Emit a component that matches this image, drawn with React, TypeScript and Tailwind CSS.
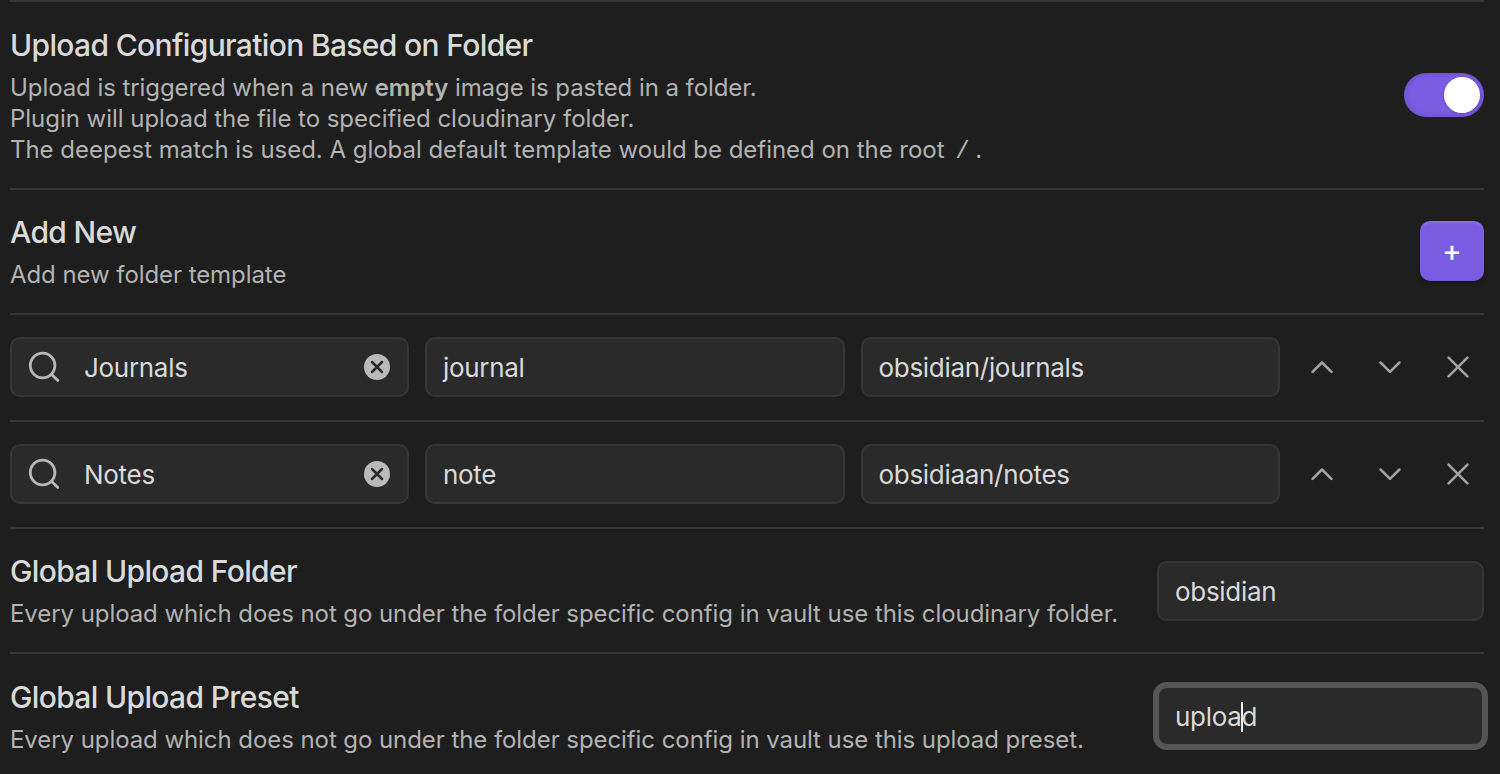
import React from "react";

const desc = "text-[24px] leading-[31px] tracking-[-0.07px] text-[#b3b3b3]";
const title = "text-[30px] leading-[39px] tracking-[-0.65px] font-[450] text-[#dadada]";
const field =
  "h-[60px] rounded-[10px] border-2 border-[#363636] bg-[#2a2a2a] text-[26px] tracking-[-0.3px] text-[#dadada]";

function SearchField({ value }: { value: string }) {
  return (
    <div className={`${field} flex w-[399px] shrink-0 items-center pl-[16px] pr-[17px]`}>
      <svg width="32" height="32" viewBox="0 0 32 32" fill="none" stroke="#b8b8b8" strokeWidth="2.8" strokeLinecap="round" className="shrink-0">
        <circle cx="14.6" cy="14.5" r="12.3" />
        <path d="M23.6 23.4l6.2 6.2" />
      </svg>
      <span className="ml-6 flex-1 pt-px">{value}</span>
      <svg width="26" height="26" viewBox="0 0 26 26" className="shrink-0">
        <circle cx="13" cy="13" r="13" fill="#bababa" />
        <path d="M8 8l10 10M18 8L8 18" stroke="#2a2a2a" strokeWidth="2.5" strokeLinecap="round" />
      </svg>
    </div>
  );
}

function Icon({ d }: { d: string }) {
  return (
    <button className="flex h-[60px] w-[52px] items-center justify-center">
      <svg width="36" height="36" viewBox="0 0 24 24" fill="none" stroke="#a3a3a3" strokeWidth="1.7" strokeLinecap="round" strokeLinejoin="round">
        <path d={d} />
      </svg>
    </button>
  );
}

function FolderRow({ folder, preset, target }: { folder: string; preset: string; target: string }) {
  return (
    <div className="flex h-[107px] border-t-2 border-[#363636] pt-[22px]">
      <SearchField value={folder} />
      <div className={`${field} ml-4 flex w-[420px] items-center pl-4 pt-px`}>{preset}</div>
      <div className={`${field} ml-4 flex w-[419px] items-center pl-[15.5px] pt-px`}>{target}</div>
      <div className="ml-4 flex gap-4">
        <Icon d="M18.3 15.3l-6.3-6.3-6.3 6.3" />
        <Icon d="M5.7 9l6.3 6.3 6.3-6.3" />
        <Icon d="M18.3 5.7l-12.6 12.6M5.7 5.7l12.6 12.6" />
      </div>
    </div>
  );
}

function Info({ name, lower = false, children }: { name: string; lower?: boolean; children: React.ReactNode }) {
  return (
    <div className={lower ? "pt-6" : "pt-[23px]"}>
      <div className={title}>{name}</div>
      <div className={`${desc} mt-[7px] whitespace-nowrap`}>{children}</div>
    </div>
  );
}

export default function App() {
  return (
    <div className="h-[774px] w-[1500px] overflow-hidden bg-[#1e1e1e] pl-[10px] pr-4 font-['Inter',sans-serif]">
      <div className="flex h-[188px] justify-between border-t-2 border-[#363636]">
        <Info name="Upload Configuration Based on Folder" lower>
          Upload is triggered when a new <b className="font-semibold">empty</b> image is pasted in a folder.
          <br />
          <span className="tracking-[-0.03px]">Plugin will upload the file to specified cloudinary folder.</span>
          <br />
          <span className="tracking-[-0.03px]">
            The deepest match is used. A global default template would be defined on the root{" "}
            <code className="ml-[4px] font-['Liberation_Mono',monospace] text-[24px] leading-none">/</code>
            <span className="ml-[-1px]"> .</span>
          </span>
        </Info>
        <button className="mt-[71px] flex h-11 w-20 justify-end rounded-full bg-[#7a5ce2] p-1 shadow-[inset_0_0_6px_rgba(0,0,0,0.15)]">
          <span className="size-9 rounded-full bg-white shadow-[0_1px_3px_rgba(0,0,0,0.15)]" />
        </button>
      </div>
      <div className="flex h-[125px] justify-between border-t-2 border-[#363636]">
        <Info name="Add New">Add new folder template</Info>
        <button className="mt-[31px] flex h-[60px] w-16 items-center justify-center rounded-[10px] bg-[#7a5ce2] shadow-[inset_0_2px_2px_rgba(255,255,255,0.12),0_2px_4px_rgba(0,0,0,0.4)]">
          <span className="text-[29px] leading-[30px] font-medium text-white">+</span>
        </button>
      </div>
      <FolderRow folder="Journals" preset="journal" target="obsidian/journals" />
      <FolderRow folder="Notes" preset="note" target="obsidiaan/notes" />
      <div className="flex h-[125px] justify-between border-t-2 border-[#363636]">
        <Info name="Global Upload Folder">
          Every upload which does not go under the folder specific config in vault use this cloudinary folder.
        </Info>
        <div className={`${field} mt-8 flex w-[327px] items-center pl-4 pt-px`}>obsidian</div>
      </div>
      <div className="flex h-[125px] justify-between border-t-2 border-[#363636]">
        <Info name="Global Upload Preset" lower>
          Every upload which does not go under the folder specific config in vault use this upload preset.
        </Info>
        <div className="mt-8 flex h-[60px] w-[327px] items-center rounded-[10px] border-2 border-[#555] bg-[#2a2a2a] pl-4 pt-px text-[26px] tracking-[-0.3px] text-[#dadada] shadow-[0_0_0_4px_#555]">
          uploa<span className="-mx-px h-[30px] w-[2px] bg-[#eee]" />d
        </div>
      </div>
    </div>
  );
}
